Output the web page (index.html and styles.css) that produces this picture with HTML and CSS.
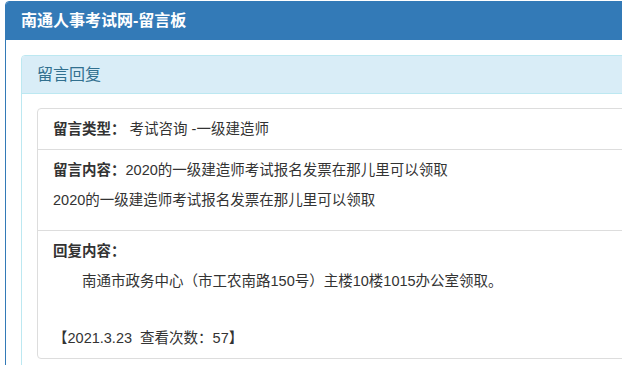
FILE: index.html
```html
<html>
  <head>
    <meta charset="utf-8">
    <title>南通人事考试网-留言板</title>
    <link rel="stylesheet" href="styles.css">
  </head>
  <body>
    <div class="panel panel-primary">
      <div class="panel-heading">南通人事考试网-留言板</div>
      <div class="panel-body">
        <div class="panel panel-info">
          <div class="panel-heading">留言回复</div>
          <div class="panel-body">
            <ul class="list-group">
              <li class="list-item"><b>留言类型：</b> 考试咨询 -一级建造师</li>
              <li class="list-item">
                <p><b>留言内容：</b>2020的一级建造师考试报名发票在那儿里可以领取</p>
                <p>2020的一级建造师考试报名发票在那儿里可以领取</p>
              </li>
              <li class="list-item">
                <p><b>回复内容：</b></p>
                <p class="reply">南通市政务中心（市工农南路150号）主楼10楼1015办公室领取。</p>
                <p class="info">【2021.3.23&nbsp; 查看次数：57】</p>
              </li>
            </ul>
          </div>
        </div>
      </div>
    </div>
  </body>
</html>
```

FILE: styles.css
```css
body {
  margin: 0;
  overflow: hidden;
  background-color: #fff;
  font-family: "Liberation Sans", "Noto Sans CJK SC", sans-serif;
  font-size: 14.5px;
  line-height: 20px;
  color: #333;
}

.panel {
  border: 1px solid #ddd;
  border-radius: 4px;
  background-color: #fff;
}

.panel-primary {
  width: 1000px;
  height: 600px;
  margin: 1px 0 0 5px;
  border-color: #337ab7;
}

.panel-heading {
  padding: 10px 15px;
  font-size: 16px;
  line-height: 17px;
  border-bottom: 1px solid transparent;
  border-radius: 3px 3px 0 0;
}

.panel-primary > .panel-heading {
  background-color: #337ab7;
  border-color: #337ab7;
  color: #fff;
  font-weight: bold;
}

.panel-body {
  padding: 15px;
}

.panel-info {
  border-color: #bce8f1;
}

.panel-info > .panel-heading {
  background-color: #d9edf7;
  border-color: #bce8f1;
  color: #31708f;
}

.panel-info > .panel-body {
  padding-top: 14px;
}

.list-group {
  list-style: none;
  margin: 0;
  padding: 0;
}

.list-item {
  padding: 10px 15px;
  border: 1px solid #ddd;
  margin-bottom: -1px;
}

.list-item:first-child {
  border-radius: 4px 4px 0 0;
}

.list-item:last-child {
  border-radius: 0 0 4px 4px;
}

.list-item p {
  margin: 0 0 10px;
}

.list-item p + p {
  margin-top: 1px;
}

.list-item .reply {
  text-indent: 2em;
  margin-bottom: 37px;
}

.list-item .info {
  margin-bottom: 0;
}
```
